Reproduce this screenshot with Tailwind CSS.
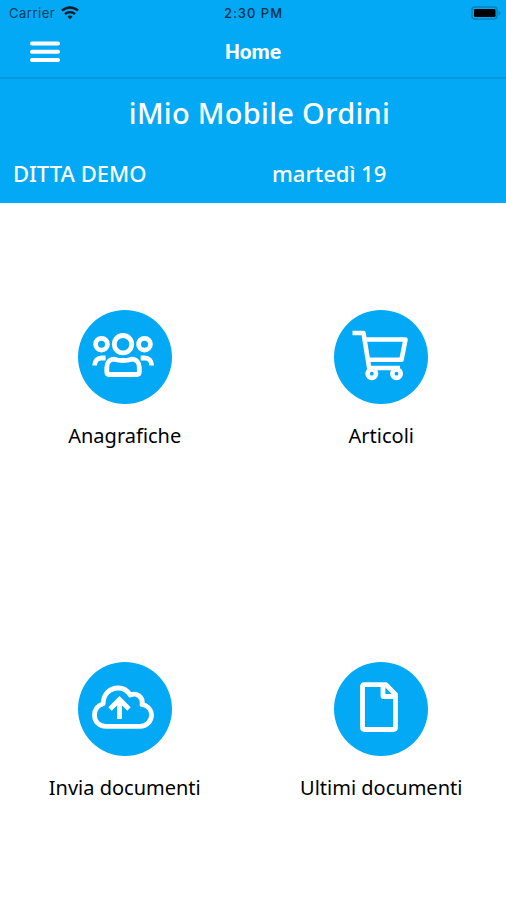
<!DOCTYPE html>
<html lang="it">

<head>
    <meta charset="UTF-8">
    <meta name="viewport" content="width=device-width, initial-scale=1.0">
    <title>iMio Mobile Ordini</title>
    <script src="https://cdn.jsdelivr.net/npm/@tailwindcss/browser@4"></script>
</head>

<body class="bg-white text-black h-[900px] overflow-hidden font-['Noto_Sans',sans-serif]">

    <!-- Status bar -->
    <div class="bg-[#03a9f4] h-[26px] grid grid-cols-3 items-center pl-[9px] pr-[5px] font-['Inter',sans-serif] text-[13px] text-[#043c5c]">
        <div class="flex items-center gap-1.5">
            <span class="pt-0.5 tracking-[0.5px]">Carrier</span>
            <svg class="w-[18px] h-[14px]" viewBox="0 0 18 14" fill="none" stroke="#001a2b" stroke-width="2.4">
                <path d="M1 4.700a11.500 11.500 0 0 1 16 0M4 8.100a7.200 7.200 0 0 1 10 0" />
                <path d="M9 13.200L6.500 10.800a3.600 3.600 0 0 1 5 0z" fill="#001a2b" stroke="none" />
            </svg>
        </div>
        <span class="pt-0.5 pr-[3px] text-center font-medium tracking-[1px] text-[#03304a]">2:30 PM</span>
        <svg class="w-[30px] h-[14px] justify-self-end" viewBox="0 0 30 14">
            <rect x="1" y="1" width="25" height="12" rx="3" fill="none" stroke="#0383bd" stroke-width="1.5" />
            <rect x="3" y="3" width="21.500" height="8" rx="1" fill="#000" />
            <path d="M27.500 4.500q2 1 2 2.500t-2 2.500z" fill="#0383bd" />
        </svg>
    </div>

    <!-- Navbar -->
    <nav class="bg-[#03a9f4] h-[53px] grid grid-cols-3 items-center border-b-2 border-[#0399de] text-white">
        <svg class="w-[30px] h-[22px] ml-[30px]" viewBox="0 0 30 22" stroke="#fff" stroke-width="4" stroke-linecap="round">
            <path d="M2 2.500h26M2 10.800h26M2 19h26" />
        </svg>
        <h1 class="pt-0.5 text-center font-['Roboto',sans-serif] text-[21px] font-bold">Home</h1>
    </nav>

    <!-- Header -->
    <header class="bg-[#03a9f4] h-[124px] text-white font-medium">
        <h2 class="pt-[14px] pl-[13px] text-center text-[29px] leading-[40px] tracking-[0.3px]">iMio Mobile Ordini</h2>
        <div class="mt-[26px] grid grid-cols-[259px_1fr] pl-[13px] text-[22px] leading-[28px]">
            <span id="company">DITTA DEMO</span>
            <span id="date">martedì 19</span>
        </div>
    </header>

    <!-- Menu -->
    <main class="grid grid-cols-2 gap-x-[7px] grid-rows-[352px_150px] pt-[107px] text-[20px] leading-[28px]">
        <a href="#" class="flex flex-col items-center gap-[18px]">
            <svg class="size-[94px]" viewBox="0 0 94 94" fill="none" stroke="#fff" stroke-width="4.8" stroke-linecap="round" stroke-linejoin="round">
                <circle cx="47" cy="47" r="47" fill="#03a9f4" stroke="none" />
                <circle cx="45" cy="34.200" r="8.700" />
                <circle cx="23.500" cy="34.200" r="5.900" />
                <circle cx="66.500" cy="34.200" r="5.900" />
                <path d="M36.500 49.200c3 1 5.500 1.300 8.500 1.300s5.500-.3 8.500-1.300c5 0 7.800 3.500 7.800 8.300v4.500q0 2.500-2.500 2.500H31.300q-2.500 0-2.500-2.500v-4.500c0-4.800 2.700-8.300 7.700-8.300z" />
                <path d="M16.600 55.500c0-5 3.200-7.500 7-7.500h4M73.700 55.500c0-5-3.200-7.500-7-7.500h-4" stroke-linecap="butt" />
            </svg>
            <span>Anagrafiche</span>
        </a>
        <a href="#" class="flex flex-col items-center gap-[18px]">
            <svg class="size-[94px]" viewBox="0 0 94 94" fill="none" stroke="#fff" stroke-width="4.6" stroke-linejoin="round">
                <circle cx="47" cy="47" r="47" fill="#03a9f4" stroke="none" />
                <path d="M18.500 23h11L35.500 60M31 29.500h40.500L67.500 49.800H34M35 58h31" />
                <circle cx="37.800" cy="63.700" r="4.200" />
                <circle cx="62.500" cy="63.700" r="4.200" />
            </svg>
            <span>Articoli</span>
        </a>
        <a href="#" class="flex flex-col items-center gap-[18px]">
            <svg class="size-[94px]" viewBox="0 0 94 94" fill="none" stroke="#fff" stroke-width="4.8" stroke-linejoin="round">
                <circle cx="47" cy="47" r="47" fill="#03a9f4" stroke="none" />
                <path d="M28 64.300C21 64.300 16.500 59.500 16.500 53.300c0-5.500 3.200-10 8.700-11.500C25 32 32 26 40.200 26c5.500 0 9.500 2.800 12 7C58.200 30.200 65.500 34.500 64 42.500c6 1 9.500 5.500 9.500 10.600 0 6.300-5 11.200-11.500 11.200z" />
                <path d="M41.500 57V37.500M32 47l9.500-9.500 9.500 9.500" stroke-linejoin="miter" />
            </svg>
            <span>Invia documenti</span>
        </a>
        <a href="#" class="flex flex-col items-center gap-[18px]">
            <svg class="size-[94px]" viewBox="0 0 94 94" fill="none" stroke="#fff" stroke-width="4.8" stroke-linejoin="round">
                <circle cx="47" cy="47" r="47" fill="#03a9f4" stroke="none" />
                <path d="M30.500 22.700H52L61.500 32.500V65.500q0 2-2 2H30.500q-2 0-2-2V24.700q0-2 2-2z" />
                <path d="M49 23v11.500h12" />
            </svg>
            <span>Ultimi documenti</span>
        </a>
    </main>

</body>

</html>
